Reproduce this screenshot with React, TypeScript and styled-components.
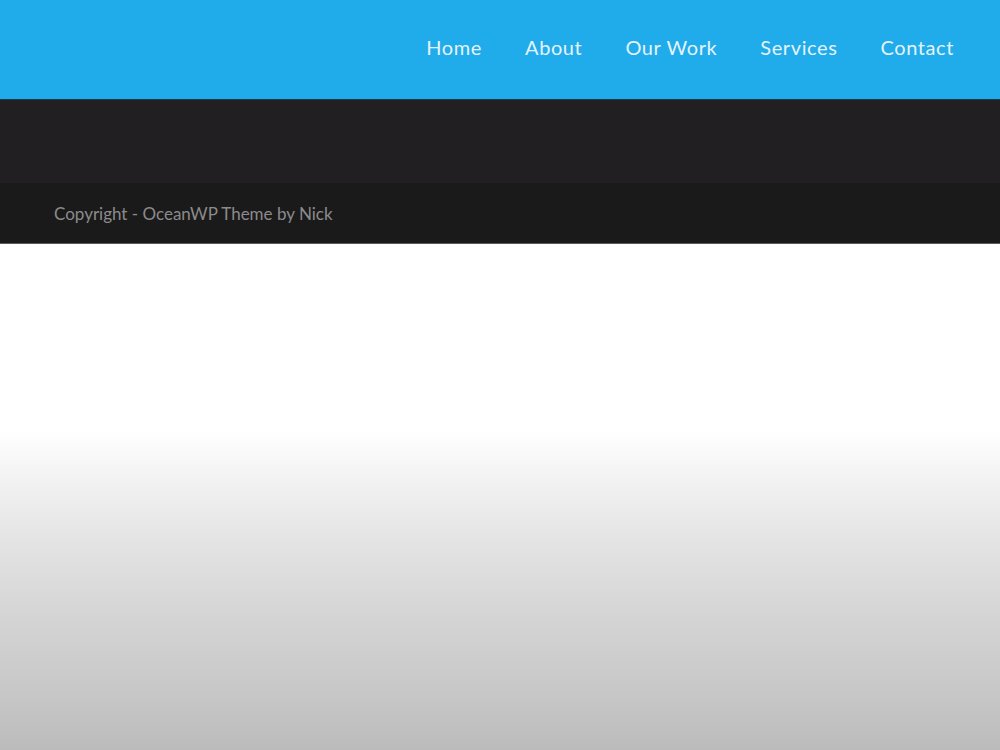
import styled, { createGlobalStyle } from 'styled-components';

const GlobalStyle = createGlobalStyle`
  html, body {
    margin: 0;
    padding: 0;
    height: 100%;
  }
  body {
    font-family: Lato, "Open Sans", sans-serif;
  }
  #root {
    min-height: 100%;
  }
`;

const Page = styled.div`
  display: flex;
  flex-direction: column;
  height: 750px;
  background: linear-gradient(
    to bottom,
    #ffffff 0px,
    #ffffff 430px,
    #f2f2f2 480px,
    #e2e2e2 550px,
    #d4d4d4 620px,
    #c6c6c6 700px,
    #bbbbbb 750px
  );
`;

const Header = styled.header`
  height: 100px;
  background-color: #20abea;
  border-bottom: 1px solid #1a3a4c;
  display: flex;
  align-items: center;
  justify-content: flex-end;
  padding: 0 46px 0 0;
  box-sizing: border-box;
`;

const Nav = styled.nav`
  display: flex;
  gap: 43px;
  margin-top: -6px;
`;

const NavLink = styled.a`
  font-family: Lato, sans-serif;
  font-size: 20px;
  letter-spacing: 0.6px;
  color: #e4f3fb;
  text-decoration: none;
`;

const Widgets = styled.div`
  height: 83px;
  background-color: #211f22;
`;

const Bottom = styled.footer`
  height: 60px;
  background-color: #1b1a1b;
  border-bottom: 1px solid #5a5a5a;
  display: flex;
  align-items: center;
  padding: 0 0 0 54px;
`;

const Copyright = styled.p`
  margin: 0;
  font-family: Lato, sans-serif;
  font-size: 17px;
  color: #8b8b8b;
`;

const links = ['Home', 'About', 'Our Work', 'Services', 'Contact'];

export default function App() {
  return (
    <Page>
      <GlobalStyle />
      <Header>
        <Nav>
          {links.map((l) => (
            <NavLink key={l} href="#">
              {l}
            </NavLink>
          ))}
        </Nav>
      </Header>
      <Widgets />
      <Bottom>
        <Copyright>Copyright - OceanWP Theme by Nick</Copyright>
      </Bottom>
    </Page>
  );
}
